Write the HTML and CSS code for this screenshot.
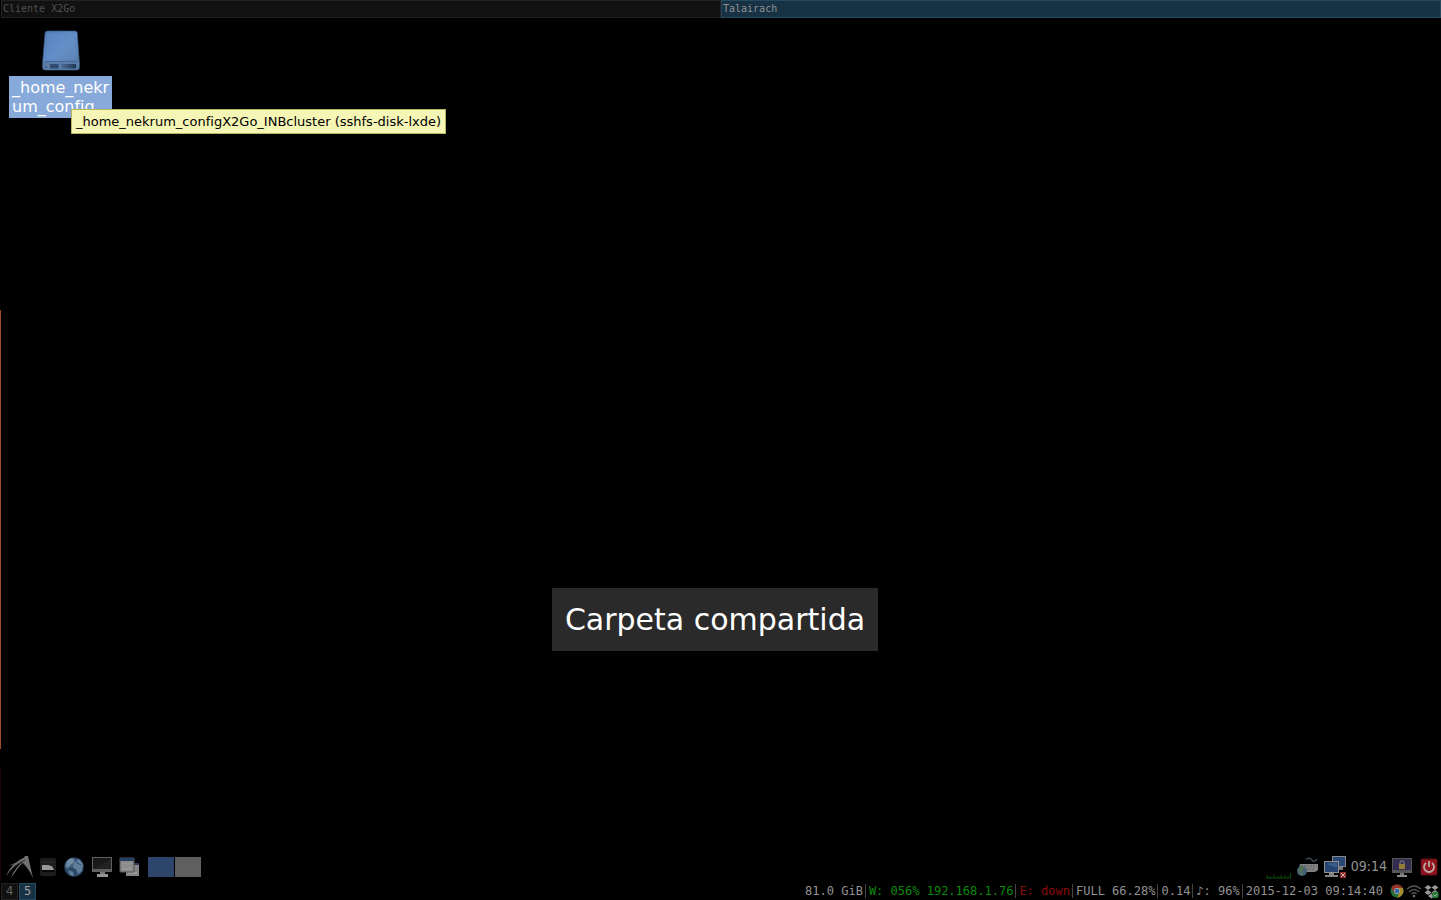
FILE: index.html
```html
<!DOCTYPE html>
<html lang="es">
<head>
<meta charset="utf-8">
<meta name="viewport" content="width=device-width, initial-scale=1">
<title>Talairach</title>
<link rel="stylesheet" href="styles.css">
</head>
<body>
<div class="screen">
  <nav class="tabs" aria-label="Ventanas">
    <button class="tab" type="button">Cliente X2Go</button>
    <button class="tab tab-active" type="button">Talairach</button>
  </nav>

  <main class="desktop">
    <button class="disk" type="button">
      <svg class="disk-icon" viewBox="0 0 44 44" aria-hidden="true">
        <defs>
          <linearGradient id="disk-top" x1="0" y1="0" x2="1" y2="1"><stop offset="0" stop-color="#4f7db8"/><stop offset=".5" stop-color="#6790c8"/><stop offset="1" stop-color="#55799f"/></linearGradient>
          <linearGradient id="disk-slot"><stop offset="0" stop-color="#4d6f99"/><stop offset="1" stop-color="#1d3655"/></linearGradient>
        </defs>
        <path d="M6 3Q6.300 1 8.500 1H36Q38 1 38.300 3L40.500 34V37Q40.500 40 38 40H6Q3.500 40 3.500 37V34Z" fill="url(#disk-top)" stroke="#38537c" stroke-width=".7"/>
        <path d="M8 3H36L38 30H6.500Z" fill="#628cc6" opacity=".4" stroke="#4a72a8" stroke-width=".5"/>
        <path d="M4 32H40V37Q40 39.500 38 39.500H6Q4 39.500 4 37Z" fill="#5a7ca7"/>
        <path d="M5 31.500H39" stroke="#456b9c" stroke-width="1"/>
        <path d="M11 34H19.500V38.500H11Z" fill="#2f4c70"/>
        <path d="M22 34H37V38.500H22Z" fill="url(#disk-slot)"/>
        <path d="M6 37H8" stroke="#34506f"/>
      </svg>
      <span class="disk-name">_home_nekr<br>um_config_</span>
    </button>
    <div class="tooltip" role="tooltip">_home_nekrum_configX2Go_INBcluster (sshfs-disk-lxde)</div>
    <p class="caption">Carpeta compartida</p>
  </main>

  <footer class="panel">
    <div class="launchers">
      <button class="icon-button menu" type="button" aria-label="Menú">
        <svg width="30" height="24" viewBox="0 0 30 24" aria-hidden="true">
          <path d="M1 21Q6 8 22 1L23 4Q9 9 1 21Z" fill="#6c6c6c"/>
          <path d="M3 11Q12 8 22 2Q13 9 3 11ZM6 23Q9 13 21 4Q12 13 6 23Z" fill="#777"/>
          <path d="M20 1H23L28 23Q24 14 17 7Z" fill="#707070"/>
          <path d="M4 17Q11 9 20 5" stroke="#2c2c2c" fill="none"/>
        </svg>
      </button>
      <button class="icon-button files" type="button" aria-label="Archivos">
        <svg width="18" height="20" viewBox="0 0 18 20" aria-hidden="true">
          <rect x="1" y="1" width="16" height="18" rx="2" fill="#1d1d1d"/><path d="M2 5H16" stroke="#2c2c2c"/><path d="M3 8H10L11 9H13L15 13H3Z" fill="#989898"/><path d="M3 14H15" stroke="#080808" stroke-width="2"/>
        </svg>
      </button>
      <button class="icon-button web" type="button" aria-label="Navegador">
        <svg width="22" height="22" viewBox="0 0 22 22" aria-hidden="true">
          <circle cx="11" cy="11" r="9.800" fill="#2c4869"/><path d="M4 5L8 2L12 3L10 7L7 9L5 13L2 10ZM12 5L16 3L20 8L19 15L15 18L13 13L10 12ZM5 14L10 16L11 20L7 19Z" fill="#617f9a"/><path d="M12 3L14 7L18 9" stroke="#2f4d70" fill="none"/><circle cx="8" cy="7" r="4" fill="#a5b9c9" opacity=".25"/>
        </svg>
      </button>
      <button class="icon-button monitor" type="button" aria-label="Escritorio">
        <svg width="22" height="22" viewBox="0 0 22 22" aria-hidden="true">
          <path d="M1 1H21V16H1Z" fill="#606060"/><path d="M2 2H20V13H2Z" fill="#181818"/><path d="M2 13L20 3V13Z" fill="#222"/><path d="M9 16H14V19H9Z" fill="#777"/><path d="M6 19.500H17" stroke="#949494" stroke-width="3"/>
        </svg>
      </button>
      <button class="icon-button windows" type="button" aria-label="Ventanas abiertas">
        <svg width="22" height="20" viewBox="0 0 22 20" aria-hidden="true">
          <path d="M7 6H20V19H7Z" fill="#858585"/><path d="M7 6H20V8H7Z" fill="#263d5b"/><path d="M9 16H18" stroke="#aaa"/><path d="M1 1H15V15H1Z" fill="#898989" stroke="#555"/><path d="M1 1H15V4H1Z" fill="#263f65"/><path d="M3 6H13V13H3Z" fill="#969696"/><path d="M3 8H13M3 10H13" stroke="#858585"/>
        </svg>
      </button>
      <button class="workspace current" type="button" aria-label="Escritorio 1"></button>
      <button class="workspace" type="button" aria-label="Escritorio 2"></button>
    </div>
    <div class="tray">
      <svg class="load" width="26" height="8" viewBox="0 0 26 8" aria-hidden="true"><path d="M0 7H25M1 7V4M4 7V5M8 7V3M12 7V5M15 7V4M19 7V4M22 7V5M24.500 7V2" stroke="#0a4b0a" fill="none"/></svg>
      <svg width="23" height="22" viewBox="0 0 23 22" aria-hidden="true">
        <path d="M10 3Q14 1 16 4T21 3" fill="none" stroke="#39474f" stroke-width="1.500"/><path d="M4 8H22V14L19 16H2Z" fill="#818181"/><path d="M5 10H20M4 13H19" stroke="#5c5c5c" stroke-dasharray="2 1"/><circle cx="6" cy="15" r="5" fill="#426078"/><path d="M2 13L6 10L9 12L6 15L7 19L4 18Z" fill="#527154"/>
      </svg>
      <svg width="24" height="24" viewBox="0 0 24 24" aria-hidden="true">
        <path d="M9 1H23V12H9Z" fill="#868686"/><path d="M10 2H22V11H10Z" fill="#284777"/><path d="M12 12H20V15H12Z" fill="#777"/><path d="M1 6H16V18H1Z" fill="#909090"/><path d="M2 7H15V17H2Z" fill="#26426e"/><path d="M3 9L14 7V13Z" fill="#3a5c8c"/><path d="M6 18H11V20H15V22H2V20H6Z" fill="#858585"/><path d="M17 17H23V23H17Z" fill="#992525"/><path d="M18 18L22 22M22 18L18 22" stroke="#bbb"/>
      </svg>
      <time class="clock">09:14</time>
      <button class="icon-button lock" type="button" aria-label="Bloquear">
        <svg width="22" height="22" viewBox="0 0 22 22" aria-hidden="true">
          <path d="M1 2H21V17H1Z" fill="#555"/><path d="M2 3H20V14H2Z" fill="#342c51"/><path d="M9 8V6Q11 3 13 6V8" fill="none" stroke="#888"/><path d="M8 8H14V13H8Z" fill="#947c39"/><path d="M9 17H13V20H9Z" fill="#777"/><path d="M6 20H16" stroke="#8b8b8b" stroke-width="2"/>
        </svg>
      </button>
      <button class="icon-button" type="button" aria-label="Apagar">
        <svg width="18" height="20" viewBox="0 0 18 20" aria-hidden="true">
          <rect x="1" y="2" width="16" height="16" rx="1" fill="#92151c" stroke="#5b1015"/><path d="M6 6A5 5 0 1 0 12 6" fill="none" stroke="#b9aaaa" stroke-width="1.800"/><path d="M9 4V10" stroke="#b9aaaa" stroke-width="1.800"/>
        </svg>
      </button>
    </div>
  </footer>

  <footer class="status">
    <div class="pages">
      <button class="page" type="button">4</button>
      <button class="page page-active" type="button">5</button>
    </div>
    <div class="stats">
      <span class="stat">81.0 GiB</span>
      <span class="stat up">W: 056% 192.168.1.76</span>
      <span class="stat down">E: down</span>
      <span class="stat">FULL 66.28%</span>
      <span class="stat">0.14</span>
      <span class="stat">♪: 96%</span>
      <time class="stat">2015-12-03 09:14:40</time>
    </div>
    <div class="status-icons">
      <svg width="14" height="14" viewBox="0 0 14 14" aria-hidden="true"><circle cx="7" cy="7" r="6.500" fill="#24703b"/><path d="M1.400 3.700A6.500 6.500 0 0 1 12.700 4H7L4 9Z" fill="#9a3029"/><path d="M7 4H12.700A6.500 6.500 0 0 1 7 13.500L10 8Z" fill="#a88c2b"/><circle cx="7" cy="7" r="3" fill="#aaa"/><circle cx="7" cy="7" r="2.300" fill="#2f67ac"/></svg>
      <svg width="16" height="14" viewBox="0 0 16 14" aria-hidden="true"><path d="M1 5Q8-1 15 5M3 8Q8 3 13 8M5.500 10Q8 7.500 10.500 10" fill="none" stroke="#555" stroke-width="1.300"/><circle cx="8" cy="12" r="1.200" fill="#777"/></svg>
      <svg width="15" height="15" viewBox="0 0 15 15" aria-hidden="true"><path d="M4 1L7.500 3.500L4 6L.5 3.500ZM11 1L14.500 3.500L11 6L7.500 3.500ZM4 6L7.500 8.500L4 11L.5 8.500ZM11 6L14.500 8.500L11 11L7.500 8.500ZM4 12L7.500 9.500L11 12L7.500 14.500Z" fill="#999"/><circle cx="11.500" cy="11" r="3.300" fill="#257b34"/><path d="M10 11L11 12.200L13 9.800" stroke="#aaa" fill="none"/></svg>
    </div>
  </footer>
</div>
</body>
</html>
```

FILE: styles.css
```css
* {
  box-sizing: border-box;
}

body {
  margin: 0;
  background: #000;
  font-family: "DejaVu Sans", sans-serif;
}

button {
  margin: 0;
  padding: 0;
  border: 0;
  background: none;
  color: inherit;
  font: inherit;
}

svg {
  display: block;
  flex: none;
}

.screen {
  position: relative;
  display: flex;
  flex-direction: column;
  min-height: 100vh;
}

/* Edges of the windows lying behind the session */
.screen::before,
.screen::after {
  content: "";
  position: absolute;
  left: 0;
  width: 1px;
}

.screen::before {
  top: 310px;
  bottom: 151px;
  background: #a04a28;
}

.screen::after {
  top: 768px;
  bottom: 19px;
  background: #1c0214;
}

.tabs {
  display: grid;
  grid-template-columns: 1fr 1fr;
  height: 18px;
  padding-left: 1px;
}

.tab {
  padding: 0 1px;
  border: 1px solid #222;
  background: #111;
  color: #505050;
  font: 10px/14px "DejaVu Sans Mono", monospace;
  text-align: left;
}

.tab-active {
  border-color: #254a5e;
  background: #173145;
  color: #929292;
}

.desktop {
  position: relative;
  flex: 1;
  display: flex;
  flex-direction: column;
  align-items: flex-start;
}

.disk {
  display: flex;
  flex-direction: column;
  align-items: center;
  margin: 12px 0 0 9px;
  gap: 2px;
}

.disk-icon {
  width: 44px;
  height: 44px;
}

.disk-name {
  padding: 2px 3px;
  background: #87aada;
  color: #fff;
  font-size: 16px;
  line-height: 19px;
  text-align: left;
}

.tooltip {
  position: absolute;
  top: 91px;
  left: 71px;
  padding: 3px 4px;
  border: 1px solid #b8b75c;
  background: #f5f5b5;
  color: #000;
  font-size: 13px;
  line-height: 17px;
  white-space: nowrap;
}

.caption {
  align-self: center;
  margin: auto 11px 202px 0;
  padding: 12px 13px;
  background: #2a2a2a;
  color: #fff;
  font-size: 30px;
  line-height: 39px;
}

.panel,
.launchers,
.tray,
.status,
.pages,
.stats,
.status-icons {
  display: flex;
  align-items: center;
}

.panel {
  justify-content: space-between;
  height: 29px;
  padding: 0 3px 2px 5px;
}

.launchers {
  gap: 6px;
}

.menu {
  margin-right: -2px;
}

.workspace {
  width: 26px;
  height: 20px;
  background: #5f5f5f;
}

.workspace.current {
  margin: 0 -5px 0 1px;
  background: #2d456a;
}

.tray {
  gap: 4px;
}

.load {
  align-self: flex-end;
}

.clock {
  color: #929292;
  font: 14px/17px "DejaVu Sans Condensed", "DejaVu Sans", sans-serif;
}

.lock {
  margin-right: 3px;
}

.status {
  height: 18px;
  padding: 0 2px 0 1px;
}

.pages {
  gap: 1px;
}

.page {
  width: 17px;
  height: 17px;
  border: 1px solid #222;
  background: #111;
  color: #626262;
  font: 12px/15px "DejaVu Sans Mono", monospace;
}

.page-active {
  border-color: #254a5e;
  background: #173145;
  color: #a0a0a0;
}

.stats {
  margin-left: auto;
  color: #929292;
  font: 12px/14px "DejaVu Sans Mono", monospace;
  white-space: nowrap;
}

.stat + .stat {
  margin-left: 2px;
  padding-left: 3px;
  border-left: 1px solid #444;
}

.stats .up {
  color: #0b890b;
}

.stats .down {
  color: #8c0b0b;
}

.status-icons {
  gap: 2px;
  margin-left: 7px;
}
```
